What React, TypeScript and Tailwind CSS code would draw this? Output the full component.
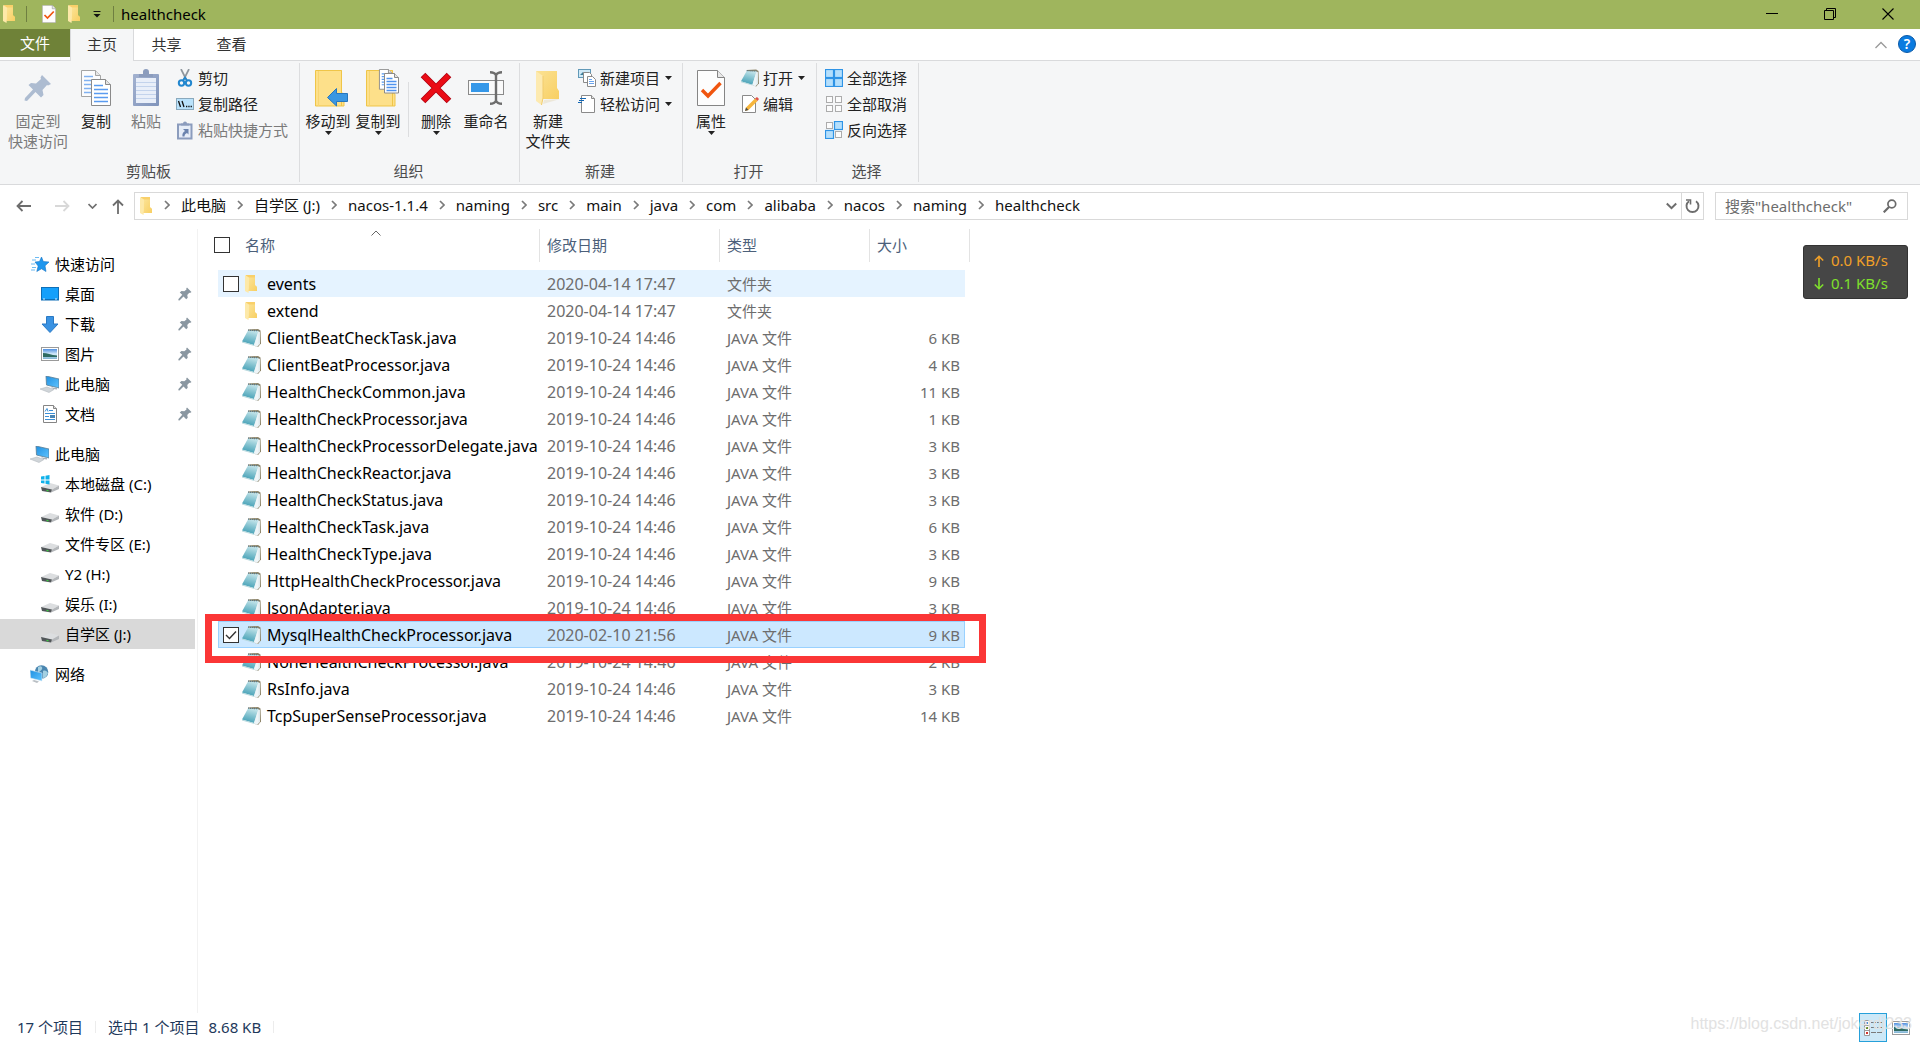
import { useState, type ReactNode } from "react";

type FileItem = { name: string; date: string; type: string; size: string };

const javaFile = (name: string, size: string, date = "2019-10-24 14:46"): FileItem => ({ name, date, type: "JAVA 文件", size });

const files: FileItem[] = [
  { name: "events", date: "2020-04-14 17:47", type: "文件夹", size: "" },
  { name: "extend", date: "2020-04-14 17:47", type: "文件夹", size: "" },
  javaFile("ClientBeatCheckTask.java", "6 KB"),
  javaFile("ClientBeatProcessor.java", "4 KB"),
  javaFile("HealthCheckCommon.java", "11 KB"),
  javaFile("HealthCheckProcessor.java", "1 KB"),
  javaFile("HealthCheckProcessorDelegate.java", "3 KB"),
  javaFile("HealthCheckReactor.java", "3 KB"),
  javaFile("HealthCheckStatus.java", "3 KB"),
  javaFile("HealthCheckTask.java", "6 KB"),
  javaFile("HealthCheckType.java", "3 KB"),
  javaFile("HttpHealthCheckProcessor.java", "9 KB"),
  javaFile("JsonAdapter.java", "3 KB"),
  javaFile("MysqlHealthCheckProcessor.java", "9 KB", "2020-02-10 21:56"),
  javaFile("NoneHealthCheckProcessor.java", "2 KB"),
  javaFile("RsInfo.java", "3 KB"),
  javaFile("TcpSuperSenseProcessor.java", "14 KB"),
];

const crumbs = ["此电脑", "自学区 (J:)", "nacos-1.1.4", "naming", "src", "main", "java", "com", "alibaba", "nacos", "naming", "healthcheck"];

/* ---------- icons ---------- */

function Gradients() {
  return (
    <svg className="absolute h-0 w-0" aria-hidden="true">
      <defs>
        <linearGradient id="folder" x1="0" x2="1" y1="0" y2="1">
          <stop offset="0" stopColor="#fbe294" />
          <stop offset="1" stopColor="#f8cf62" />
        </linearGradient>
        <linearGradient id="note" x1="0.6" x2="0.3" y1="0" y2="1">
          <stop offset="0" stopColor="#c3e4ea" />
          <stop offset="0.5" stopColor="#7fc0ce" />
          <stop offset="1" stopColor="#3f9db4" />
        </linearGradient>
        <linearGradient id="screen" x1="0" x2="1" y1="0" y2="1">
          <stop offset="0" stopColor="#1f8fe0" />
          <stop offset="1" stopColor="#5ec4ff" />
        </linearGradient>
        <linearGradient id="sky" x1="0" x2="0" y1="0" y2="1">
          <stop offset="0" stopColor="#4f8fe0" />
          <stop offset="0.5" stopColor="#d6ebfa" />
          <stop offset="1" stopColor="#7fb3d3" />
        </linearGradient>
        <linearGradient id="clip" x1="0" x2="1" y1="0" y2="1">
          <stop offset="0" stopColor="#a3b2d0" />
          <stop offset="1" stopColor="#8094bb" />
        </linearGradient>
      </defs>
    </svg>
  );
}

const SmallFolder = () => (
  <svg width="13" height="18" viewBox="0 0 13 18">
    <path d="M1 0h9v10l2 2v4H1z" fill="#f9d06a" />
    <path d="M0 0l4 2.500v11L3.500 18 0 16z" fill="#fde9a9" />
    <path d="M4 2.500h6V11l2 1v4H3.800z" fill="url(#folder)" />
  </svg>
);

const BigFolder = () => (
  <svg width="26" height="36" viewBox="0 0 26 36">
    <path d="M1 1h21v17l2 3v8H1z" fill="url(#folder)" />
    <path d="M1 1l7 5v22l-1.500 7L1 31z" fill="#fdeab0" />
    <path d="M8 6v22l-1.500 7" stroke="#f1cc6c" fill="none" />
    <path d="M9 30l16-1-17 5z" fill="#e5d9bb" opacity="0.5" />
  </svg>
);

const NoteIcon = () => (
  <svg width="19" height="18" viewBox="0 0 19 18">
    <path d="M6 .5l10-.5 2.500 1.500.5 13-3 3.500-3-1z" fill="#8d8468" />
    <path d="M15.500 2L18 3v12l-3 3-3.500-2z" fill="#dfe9ec" />
    <path d="M6 1.500l10.500.500L12 16 0 12.500z" fill="url(#note)" />
    <path d="M6 1.200l10.500.600" stroke="#57798a" strokeWidth="1.200" strokeDasharray="1 1" />
    <path d="M12 16l4.500-14v13.500l-1.500 2z" fill="#eef5f8" />
    <path d="M0 12.500L12 16l.300 1L0 13.500z" fill="#b5d7dc" />
  </svg>
);

const PropertiesIcon = ({ className }: { className: string }) => (
  <svg className={className} viewBox="0 0 28 36">
    <path d="M.5.5h20l7 7v28H.5z" fill="#fdfdfd" stroke="#858585" />
    <path d="M20.500.5v7h7" fill="#e8e8e8" stroke="#858585" />
    <path d="M5 20l6 6L23.500 13" fill="none" stroke="#f0550f" strokeWidth="3.400" />
  </svg>
);

const BigPin = () => (
  <svg width="28" height="28" viewBox="0 0 28 28" fill="#adbcd1">
    <path d="M18 1l9 9-3 1.500-1-.5-4.500 5 1 5-2.500 2.500-5.500-5.500L3 27l-2.500-.5L1 24l8-8.500L4.500 11 7 9l5 .5L17 5l-.5-1.500z" />
  </svg>
);

const Pin = () => (
  <svg width="14" height="14" viewBox="0 0 28 28" fill="#8a97a1">
    <path d="M18 1l9 9-3 2-1.500-.5-4 4.500 1 5.500-3 3-5.500-5.500L3 27l-2.500-.5L1 24l7.500-8.500L3.500 11 7 8l5.500.5L17 5l-.5-2z" />
  </svg>
);

const Page = ({ x, y, big }: { x: number; y: number; big?: boolean }) => (
  <g transform={`translate(${x} ${y})`}>
    <path d={big ? "M.5.5h14l5 5v21H.5z" : "M.5.5h10l4 4v18H.5z"} fill="#fff" stroke="#8a8a8a" />
    <path d={big ? "M14.500.5v5h5" : "M10.500.5v4h4"} fill="#e4e4e4" stroke="#8a8a8a" />
    <path d={big ? "M3 6.500h9M3 10.500h14M3 14.500h14M3 18.500h14M3 22.500h14" : "M3 5.500h6M3 8.500h9M3 11.500h9M3 14.500h9M3 17.500h9"} stroke="#5a9bf0" strokeWidth="1.300" />
  </g>
);

const CopyIcon = () => (
  <svg width="30" height="37" viewBox="0 0 30 37">
    <g opacity="0.750"><Page x={0} y={0} big /></g>
    <Page x={10} y={9} big />
  </svg>
);

const PasteIcon = () => (
  <svg width="26" height="38" viewBox="0 0 26 38">
    <rect x="0" y="5" width="26" height="32" rx="1" fill="url(#clip)" />
    <rect x="3" y="9" width="20" height="25" fill="#e9eff9" />
    <path d="M3 13.500h20M3 17.500h20M3 21.500h20M3 25.500h20M3 29.500h20" stroke="#c3d3ec" />
    <path d="M6 8V5h4V3a3 3 0 016 0v2h4v3z" fill="#8b9cbd" />
  </svg>
);

const CutIcon = () => (
  <svg width="18" height="18" viewBox="0 0 18 18" fill="none">
    <path d="M5 0l5.500 11M13 0L7.500 11" stroke="#8f979e" strokeWidth="1.700" />
    <circle cx="5.500" cy="14" r="2.700" stroke="#2287cf" strokeWidth="2" />
    <circle cx="12.500" cy="14" r="2.700" stroke="#2287cf" strokeWidth="2" />
    <path d="M7 11.500l2-3 2 3" stroke="#2287cf" strokeWidth="1.800" />
  </svg>
);

const CopyPathIcon = () => (
  <svg width="18" height="12" viewBox="0 0 18 12">
    <rect x=".5" y=".5" width="17" height="11" fill="#b9e2fb" stroke="#8aa9bd" />
    <path d="M2.500 3l2 6M6 3l2 6" stroke="#111" strokeWidth="1.300" />
    <path d="M10 8.500h1.300M12.300 8.500h1.300M14.600 8.500h1.300" stroke="#111" strokeWidth="1.300" />
  </svg>
);

const PasteShortcutIcon = () => (
  <svg width="16" height="19" viewBox="0 0 16 19">
    <path d="M1 3.500h13.500v14H1z" fill="#e6edf8" stroke="#8b9cbd" strokeWidth="2" />
    <path d="M4 4.500V2.500h2a2 2 0 014 0h2v2z" fill="#8b9cbd" />
    <path d="M6 8h5.500v5.500L10 12c-2 .8-2.500 2-2.500 3.500h-2C5 13 6 11 8 10z" fill="#6b83ae" />
  </svg>
);

const FolderBody = () => (
  <>
    <path d="M.5.500h26V26l0-2c1-1.500 2.500-1 2.500 1v11H.5z" fill="#fde08a" stroke="#efc548" />
    <path d="M26.500.5V36" stroke="#efc548" />
    <path d="M3.500 1v35" stroke="#f8d571" />
  </>
);

const MoveToIcon = () => (
  <svg width="40" height="37" viewBox="-7 0 40 37">
    <FolderBody />
    <path d="M12.500 27.500l9-9v5h11v8h-11V36z" fill="#3a97e3" stroke="#2877bd" />
  </svg>
);

const CopyToIcon = () => (
  <svg width="42" height="38" viewBox="-9 0 42 38">
    <g transform="translate(0 1)"><FolderBody /></g>
    <g transform="translate(13 0) scale(0.900)"><Page x={0} y={0} /></g>
    <g transform="translate(18 4)">
      <path d="M.5.500h10l4 4V20H.5z" fill="#fff" stroke="#8a8a8a" />
      <path d="M10.500.5v4h4" fill="#e4e4e4" stroke="#8a8a8a" />
      <path d="M2.500 5.500h6M2.500 8.500h10M2.500 11.500h10M2.500 14.500h10M2.500 17.500h10" stroke="#4f93ee" strokeWidth="1.300" />
    </g>
  </svg>
);

const DeleteIcon = () => (
  <svg width="32" height="32" viewBox="0 0 32 32">
    <path d="M3 3l26 26M29 3L3 29" stroke="#b00010" strokeWidth="6.500" />
    <path d="M3.500 3.500l25 25M28.500 3.500l-25 25" stroke="#ea0c15" strokeWidth="4.800" />
  </svg>
);

const RenameIcon = () => (
  <svg width="36" height="34" viewBox="0 0 36 34" fill="none">
    <rect x=".5" y="9.500" width="35" height="14" fill="#fafafa" stroke="#8a8a8a" />
    <rect x="3" y="12" width="18" height="9" fill="#3497e8" />
    <path d="M22 1.200c3 0 5 .8 6 3 1-2.200 3-3 6-3M22 32.800c3 0 5-.8 6-3 1 2.200 3 3 6 3M28 4v26" stroke="#6d6d6d" strokeWidth="2.400" />
  </svg>
);

const NewItemIcon = () => (
  <svg width="18" height="18" viewBox="0 0 18 18">
    <rect x=".5" y=".5" width="12" height="8" fill="#cfe9f7" stroke="#6199b8" />
    <path d="M2 6l3-3 3 3z" fill="#3c7d98" />
    <path d="M5.500 3.500h6l2 2v8h-8z" fill="#fff" stroke="#8a8a8a" />
    <path d="M9.500 7.500h5l3 3v7h-8z" fill="#fff" stroke="#8a8a8a" />
    <path d="M11 10.500h3M11 12.500h5M11 14.500h5" stroke="#6aa4ee" />
  </svg>
);

const EasyAccessIcon = () => (
  <svg width="18" height="18" viewBox="0 0 18 18">
    <path d="M3.500.5h10l3 3v14h-13z" fill="#fff" stroke="#8a8a8a" />
    <path d="M13.500.5v3h3" fill="#e4e4e4" stroke="#8a8a8a" />
    <path d="M2 3.500h6M1 5.500h5M0 7.500h4" stroke="#1467b3" strokeWidth="1.200" />
  </svg>
);

const EditIcon = () => (
  <svg width="18" height="18" viewBox="0 0 18 18">
    <path d="M1.500.5h9l4 4v13h-13z" fill="#fff" stroke="#8a8a8a" />
    <path d="M5 12.500l9-9 2.500 2.500-9 9L4 16z" fill="#f6b53c" />
    <path d="M14 3.500L16 2l2 2-1.500 2z" fill="#e0524a" />
    <path d="M4 16l1-3.500L7.500 15z" fill="#4a4a4a" />
  </svg>
);

function SelectIcon({ on }: { on: boolean[] }) {
  const spots = [[0, 0], [9, 0], [0, 9], [9, 9]];
  return (
    <svg width="18" height="18" viewBox="0 0 18 18">
      {spots.map(([x, y], i) => on[i]
        ? <rect key={i} x={x + 0.5} y={y + 0.5} width="8" height="8" fill="#b5dffc" stroke="#2f94e6" strokeWidth="1.200" />
        : <rect key={i} x={x + 1.5} y={y + 1.5} width="6" height="6" fill="#fcfcfc" stroke="#acacac" />)}
    </svg>
  );
}

const StarIcon = () => (
  <svg width="18" height="18" viewBox="0 0 18 18">
    <path d="M10.500 2l1.800 4.500 5.700.5-4 3.800 1 5.700-4.500-2.700L5.800 16.500 7.200 11 4 7l4.500-.5z" fill="#1f97ee" stroke="#1673c4" strokeWidth=".6" />
    <path d="M4 2.500h4M1 5h4M0 9h4M1 12.500h4M0 15h4" stroke="#6cbaf2" />
  </svg>
);

const DesktopIcon = () => (
  <svg width="18" height="14" viewBox="0 0 18 14">
    <rect x=".5" y=".5" width="17" height="12.500" fill="#15a0fb" stroke="#0e6fb8" />
    <path d="M1 12.500h16" stroke="#0e6fb8" />
    <path d="M2 12h2M14 12h2" stroke="#d7efff" />
  </svg>
);

const DownloadIcon = () => (
  <svg width="18" height="17" viewBox="0 0 18 17">
    <path d="M5.500.5h7V8h4.500l-8 8.500L1 8h4.500z" fill="#3a92e2" stroke="#2a79c4" />
  </svg>
);

const PictureIcon = () => (
  <svg width="18" height="14" viewBox="0 0 18 14">
    <rect x=".5" y=".5" width="17" height="13" fill="#fff" stroke="#9a9a9a" />
    <rect x="2" y="2" width="14" height="10" fill="url(#sky)" />
    <path d="M2 6c4 0 8 2 14 2.500V10H2z" fill="#2f6b62" />
  </svg>
);

const ComputerIcon = () => (
  <svg width="19" height="17" viewBox="0 0 19 17">
    <path d="M6 0l13 3v9L6.500 9z" fill="url(#screen)" stroke="#5b7d94" strokeWidth=".8" />
    <path d="M11 11l3 1 3-.5v2l-4-.5z" fill="#a8b1b8" />
    <path d="M0 13l7-2 7 2.500-5 3z" fill="#d0d5d9" stroke="#b3babf" strokeWidth=".6" />
  </svg>
);

const DocumentIcon = () => (
  <svg width="18" height="18" viewBox="0 0 18 18">
    <path d="M2.500.5h10l3 3v14h-13z" fill="#fff" stroke="#858585" />
    <path d="M12.500.5v3h3" fill="#ddd" stroke="#858585" />
    <path d="M4 6.500l2-3 1 3M8 5.500h4M4 8.500h10M4 11.500h4M4 14.500h10" stroke="#3b8fd6" fill="none" />
    <rect x="9" y="10" width="5" height="3" fill="#4a86b5" />
  </svg>
);

const DriveIcon = ({ system }: { system?: boolean }) => (
  <svg width="18" height="18" viewBox="0 -2 18 18">
    <path d="M0 10l9-4 9 2.500-7 4z" fill="#dcdee0" />
    <path d="M11 12.500l7-4V12l-8 3.500z" fill="#b4b7ba" />
    <path d="M0 10l11 2.500-1 3L1 14z" fill="#515659" />
    <path d="M5.500 12.800l2 .4v1.300l-2-.4z" fill="#3ecf45" />
    {system && <path d="M0-.5L3.500-1v3.500H0zM4.500-1.200L8.500-2v4.500h-4zM0 3.500h3.500v3L0 6zM4.500 3.500h4v4l-4-.8z" fill="#10b1ea" />}
  </svg>
);

const NetworkIcon = () => (
  <svg width="19" height="18" viewBox="0 0 19 18">
    <circle cx="11.500" cy="7" r="6.800" fill="#4a86b0" />
    <path d="M8 2c3-2 5 0 4 2s-3 2-4 5M13 6c2-1 4 0 5 2-1 3-3 5-5 5z" fill="#a4d0e2" />
    <path d="M0 5l12 3v8L.5 13z" fill="url(#screen)" stroke="#dbe9f2" strokeWidth=".6" />
    <path d="M4 15l5 1.500-2 1.500-5-2z" fill="#b9bfc4" />
  </svg>
);

const DownArrow = () => (
  <svg width="7" height="4" viewBox="0 0 7 4"><path d="M0 0h7L3.500 4z" fill="#222" /></svg>
);

const ChevronRight = () => (
  <svg width="6" height="10" viewBox="0 0 6 10"><path d="M1 1l4 4-4 4" fill="none" stroke="#7a7a7a" strokeWidth="1.700" /></svg>
);

/* ---------- ribbon ---------- */

function RibbonGroup({ label, width, children }: { label: string; width: string; children: ReactNode }) {
  return (
    <div className={`my-[2px] flex shrink-0 flex-col border-r border-[#dcdddf] ${width}`}>
      <div className="flex flex-1 items-start pl-[3px]">{children}</div>
      <div className="pr-[2px] pb-px text-center leading-5 text-[#4c4c4c]">{label}</div>
    </div>
  );
}

type BigButtonProps = { icon: ReactNode; lines: string[]; wide?: boolean; menu?: boolean; disabled?: boolean };

function BigButton({ icon, lines, wide, menu, disabled }: BigButtonProps) {
  return (
    <button disabled={disabled} className={`flex flex-col items-center pt-[6px] leading-5 ${wide ? "w-[68px] pl-[2px]" : "w-[50px]"} ${disabled ? "text-[#7a7a7a]" : "text-[#222]"}`}>
      <span className="mb-1 flex h-[38px] items-center">{icon}</span>
      {lines.map((line) => <span key={line} className="whitespace-nowrap">{line}</span>)}
      {menu && <DownArrow />}
    </button>
  );
}

type SmallButtonProps = { icon: ReactNode; label: string; menu?: boolean; disabled?: boolean };

function SmallButton({ icon, label, menu, disabled }: SmallButtonProps) {
  return (
    <button disabled={disabled} className={`flex h-[26px] items-center gap-1 whitespace-nowrap ${disabled ? "text-[#7a7a7a]" : "text-[#222]"}`}>
      <span className="flex w-[18px] justify-center">{icon}</span>
      <span className="pb-px">{label}</span>
      {menu && <span className="pl-px"><DownArrow /></span>}
    </button>
  );
}

const SmallList = ({ children }: { children: ReactNode }) => <div className="flex flex-col pt-[2px] pl-[5px]">{children}</div>;

function Ribbon() {
  return (
    <div className="flex h-[124px] border-b border-[#d9dadc] bg-[#f5f6f7]">
      <RibbonGroup label="剪贴板" width="w-[300px]">
        <BigButton icon={<BigPin />} lines={["固定到", "快速访问"]} wide disabled />
        <BigButton icon={<CopyIcon />} lines={["复制"]} />
        <BigButton icon={<PasteIcon />} lines={["粘贴"]} disabled />
        <SmallList>
          <SmallButton icon={<CutIcon />} label="剪切" />
          <SmallButton icon={<CopyPathIcon />} label="复制路径" />
          <SmallButton icon={<PasteShortcutIcon />} label="粘贴快捷方式" disabled />
        </SmallList>
      </RibbonGroup>
      <RibbonGroup label="组织" width="w-[220px]">
        <BigButton icon={<MoveToIcon />} lines={["移动到"]} menu />
        <BigButton icon={<CopyToIcon />} lines={["复制到"]} menu />
        <div className="mt-[19px] mr-[2px] ml-[5px] h-[55px] w-px bg-[#dcdddf]" />
        <BigButton icon={<DeleteIcon />} lines={["删除"]} menu />
        <BigButton icon={<RenameIcon />} lines={["重命名"]} />
      </RibbonGroup>
      <RibbonGroup label="新建" width="w-[163px]">
        <BigButton icon={<BigFolder />} lines={["新建", "文件夹"]} />
        <SmallList>
          <SmallButton icon={<NewItemIcon />} label="新建项目" menu />
          <SmallButton icon={<EasyAccessIcon />} label="轻松访问" menu />
        </SmallList>
      </RibbonGroup>
      <RibbonGroup label="打开" width="w-[134px]">
        <BigButton icon={<PropertiesIcon className="h-9 w-7" />} lines={["属性"]} menu />
        <SmallList>
          <SmallButton icon={<NoteIcon />} label="打开" menu />
          <SmallButton icon={<EditIcon />} label="编辑" />
        </SmallList>
      </RibbonGroup>
      <RibbonGroup label="选择" width="w-[102px]">
        <SmallList>
          <SmallButton icon={<SelectIcon on={[true, true, true, true]} />} label="全部选择" />
          <SmallButton icon={<SelectIcon on={[false, false, false, false]} />} label="全部取消" />
          <SmallButton icon={<SelectIcon on={[false, true, true, false]} />} label="反向选择" />
        </SmallList>
      </RibbonGroup>
    </div>
  );
}

/* ---------- title, tabs, address ---------- */

function TitleBar() {
  return (
    <header className="flex h-[29px] items-center bg-[#9fb55d] pb-px pl-[3px] text-black">
      <SmallFolder />
      <div className="ml-[10px] h-4 w-px bg-[#6f7f41]" />
      <button aria-label="属性" className="ml-[15px]"><PropertiesIcon className="h-[18px] w-[14px]" /></button>
      <button aria-label="新建文件夹" className="ml-3"><SmallFolder /></button>
      <button aria-label="自定义快速访问工具栏" className="ml-3">
        <svg width="8" height="8" viewBox="0 0 8 8"><path d="M.5 1.500h7" stroke="#111" /><path d="M.5 4h7L4 7.500z" fill="#111" /></svg>
      </button>
      <div className="ml-3 h-4 w-px bg-[#6f7f41]" />
      <h1 className="ml-[7px] flex-1">healthcheck</h1>
      <button aria-label="最小化" className="flex h-full w-[58px] items-center justify-center">
        <svg width="12" height="12" viewBox="0 0 12 12"><path d="M0 5.500h12" stroke="#000" /></svg>
      </button>
      <button aria-label="还原" className="flex h-full w-[58px] items-center justify-center">
        <svg width="12" height="12" viewBox="0 0 12 12" fill="none" stroke="#000"><path d="M.5 2.500h9v9h-9zM2.500 2.500v-2h9v9h-2" /></svg>
      </button>
      <button aria-label="关闭" className="mr-[3px] flex h-full w-[58px] items-center justify-center">
        <svg width="12" height="12" viewBox="0 0 12 12"><path d="M.5.5l11 11M11.500.5l-11 11" stroke="#000" strokeWidth="1.100" /></svg>
      </button>
    </header>
  );
}

function Tabs() {
  return (
    <nav className="flex h-8 border-b border-[#d9dadc] text-[#333]">
      <button className="mb-[3px] w-[70px] bg-[#6f8238] text-white">文件</button>
      <button className="-mb-px w-16 border-x border-[#d9dadc] bg-[#f5f6f7] pb-[2px]">主页</button>
      <button className="w-[65px] pb-px">共享</button>
      <button className="w-[65px] pb-px">查看</button>
      <div className="flex-1" />
      <button aria-label="最小化功能区">
        <svg width="12" height="8" viewBox="0 0 12 8"><path d="M.5 7L6 1.500 11.500 7" fill="none" stroke="#9a9a9a" strokeWidth="1.300" /></svg>
      </button>
      <button aria-label="帮助" className="mr-1 ml-[11px] pb-px">
        <span className="flex h-[18px] w-[18px] items-center justify-center rounded-full border border-[#0b5aa8] bg-[#0a7be0] text-sm leading-4 font-semibold text-white">?</span>
      </button>
    </nav>
  );
}

function AddressBar() {
  return (
    <div className="flex h-11 items-start pt-[7px] pr-3 pl-4">
      <div className="flex h-7 w-[118px] shrink-0 items-center">
        <button aria-label="后退" className="mr-6">
          <svg width="15" height="12" viewBox="0 0 15 12"><path d="M15 6H1.500M6.500 1l-5 5 5 5" fill="none" stroke="#6d6d6d" strokeWidth="1.800" /></svg>
        </button>
        <button aria-label="前进" className="mr-[18px]">
          <svg width="15" height="12" viewBox="0 0 15 12"><path d="M0 6h13.500M8.500 1l5 5-5 5" fill="none" stroke="#d8d8d8" strokeWidth="1.800" /></svg>
        </button>
        <button aria-label="最近浏览的位置" className="mr-[15px]">
          <svg width="9" height="6" viewBox="0 0 9 6"><path d="M.5 1l4 4 4-4" fill="none" stroke="#707070" strokeWidth="1.700" /></svg>
        </button>
        <button aria-label="上移">
          <svg width="12" height="15" viewBox="0 0 12 15"><path d="M6 15V1.500M1 6.500l5-5 5 5" fill="none" stroke="#6d6d6d" strokeWidth="1.800" /></svg>
        </button>
      </div>
      <div className="flex h-7 flex-1 items-center border border-[#d9d9d9] pl-[5px] whitespace-nowrap text-[#111]">
        <SmallFolder />
        {crumbs.map((crumb, i) => (
          <span key={i} className="flex items-center gap-[11px] pb-[2px] pl-[11px]">
            <ChevronRight />
            <a href="#">{crumb}</a>
          </span>
        ))}
        <div className="flex-1" />
        <button aria-label="上一个位置" className="mr-1">
          <svg width="11" height="8" viewBox="0 0 11 8"><path d="M.8 1.500l4.700 4.700 4.700-4.700" fill="none" stroke="#6d6d6d" strokeWidth="2" /></svg>
        </button>
        <button aria-label="刷新" className="flex h-full w-[22px] items-center justify-center border-l border-[#d9d9d9]">
          <svg width="15" height="15" viewBox="0 0 15 15" fill="none" stroke="#6d6d6d" strokeWidth="1.900"><path d="M11 2.200a6 6 0 11-7 0" /><path d="M1 1h4.500v4.500" strokeWidth="1.600" /></svg>
        </button>
      </div>
      <label className="ml-[11px] flex h-7 w-[193px] items-center border border-[#d9d9d9] pr-[10px] pl-[9px]">
        <input aria-label="搜索" placeholder={'搜索"healthcheck"'} className="w-full min-w-0 flex-1 outline-none placeholder:text-[#6d6d6d]" />
        <svg width="14" height="14" viewBox="0 0 14 14" fill="none" stroke="#6a6a6a"><circle cx="8.800" cy="5" r="3.900" strokeWidth="1.700" /><path d="M6 8l-5.300 5.300" strokeWidth="2.200" /></svg>
      </label>
    </div>
  );
}

/* ---------- sidebar ---------- */

function NavItem({ icon, label, root, pinned, active }: { icon: ReactNode; label: string; root?: boolean; pinned?: boolean; active?: boolean }) {
  return (
    <li>
      <a href="#" className={`mr-[2px] flex h-[30px] items-center gap-[6px] pr-[3px] ${root ? "pl-[30px]" : "pl-10"} ${active ? "bg-[#d9d9d9]" : ""}`}>
        <span className="flex w-[19px] justify-center">{icon}</span>
        <span className="flex-1">{label}</span>
        {pinned && <Pin />}
      </a>
    </li>
  );
}

function Sidebar() {
  return (
    <aside className="w-[198px] shrink-0 border-r border-[#f2f2f2] pt-5 text-black">
      <ul className="mb-[10px]">
        <NavItem root icon={<StarIcon />} label="快速访问" />
        <NavItem pinned icon={<DesktopIcon />} label="桌面" />
        <NavItem pinned icon={<DownloadIcon />} label="下载" />
        <NavItem pinned icon={<PictureIcon />} label="图片" />
        <NavItem pinned icon={<ComputerIcon />} label="此电脑" />
        <NavItem pinned icon={<DocumentIcon />} label="文档" />
      </ul>
      <ul className="mb-[10px]">
        <NavItem root icon={<ComputerIcon />} label="此电脑" />
        <NavItem icon={<DriveIcon system />} label="本地磁盘 (C:)" />
        <NavItem icon={<DriveIcon />} label="软件 (D:)" />
        <NavItem icon={<DriveIcon />} label="文件专区 (E:)" />
        <NavItem icon={<DriveIcon />} label="Y2 (H:)" />
        <NavItem icon={<DriveIcon />} label="娱乐 (I:)" />
        <NavItem active icon={<DriveIcon />} label="自学区 (J:)" />
      </ul>
      <ul>
        <NavItem root icon={<NetworkIcon />} label="网络" />
      </ul>
    </aside>
  );
}

/* ---------- file table ---------- */

function Checkbox({ label, checked, onChange, visible = true }: { label: string; checked: boolean; onChange: () => void; visible?: boolean }) {
  return (
    <span className={`relative block h-4 w-4 ${visible ? "" : "opacity-0 hover:opacity-100"}`}>
      <input type="checkbox" aria-label={label} checked={checked} onChange={onChange} className="block h-4 w-4 appearance-none border border-[#333] bg-white" />
      {checked && (
        <svg className="pointer-events-none absolute inset-0" width="16" height="16" viewBox="0 0 16 16"><path d="M3 8l3.500 3.500L13 4.500" fill="none" stroke="#333" strokeWidth="1.400" /></svg>
      )}
    </span>
  );
}

function FileTable() {
  const [selected, setSelected] = useState(["MysqlHealthCheckProcessor.java"]);
  const toggle = (name: string) =>
    setSelected((prev) => (prev.includes(name) ? prev.filter((n) => n !== name) : [...prev, name]));

  const allSelected = selected.length === files.length;

  return (
    <div className="relative ml-4 w-[756px] self-start">
      <table className="w-full table-fixed border-separate border-spacing-0 whitespace-nowrap">
        <colgroup>
          <col className="w-1" />
          <col className="w-[322px]" />
          <col className="w-[180px]" />
          <col className="w-[150px]" />
          <col className="w-[95px]" />
          <col className="w-[5px]" />
        </colgroup>
        <thead className="text-left text-[#4c607a]">
          <tr>
            <th colSpan={2} className="relative p-0 pb-2 font-normal">
              <div className="flex h-[33px] items-center gap-[15px] border-r border-[#e3e3e3] pb-px">
                <Checkbox label="全选" checked={allSelected} onChange={() => setSelected(allSelected ? [] : files.map((f) => f.name))} />
                <button>名称</button>
              </div>
              <svg className="absolute top-px left-[157px]" width="10" height="6" viewBox="0 0 10 6"><path d="M.5 5.500L5 1l4.500 4.500" fill="none" stroke="#666" /></svg>
            </th>
            <th className="p-0 pb-2 font-normal">
              <div className="flex h-[33px] items-center border-r border-[#e3e3e3] pb-px pl-[7px]"><button>修改日期</button></div>
            </th>
            <th className="p-0 pb-2 font-normal">
              <div className="flex h-[33px] items-center border-r border-[#e3e3e3] pb-px pl-[7px]"><button>类型</button></div>
            </th>
            <th colSpan={2} className="p-0 pb-2 font-normal">
              <div className="flex h-[33px] items-center border-r border-[#e3e3e3] pb-px pl-[7px]"><button>大小</button></div>
            </th>
          </tr>
        </thead>
        <tbody className="text-[#6d6d6d]">
          {files.map((file, i) => {
            const isSelected = selected.includes(file.name);
            const hovered = i === 0;
            const cell = `border-y p-0 ${isSelected ? "border-[#99d1ff] bg-[#cce8ff]" : hovered ? "border-[#e5f3ff] bg-[#e5f3ff]" : "border-transparent"}`;
            return (
              <tr key={file.name} className="h-[27px]">
                <td className="p-0" />
                <td className={`${cell} border-l`}>
                  <div className="flex h-[25px] items-center pl-1 text-base leading-5 text-black">
                    <Checkbox label={file.name} checked={isSelected} visible={isSelected || hovered} onChange={() => toggle(file.name)} />
                    <span className="mr-[6px] ml-[3px] flex w-[19px] justify-center">{file.type === "文件夹" ? <SmallFolder /> : <NoteIcon />}</span>
                    <span>{file.name}</span>
                  </div>
                </td>
                <td className={`${cell} pl-[7px] text-base leading-5`}>{file.date}</td>
                <td className={`${cell} pl-[7px]`}>{file.type}</td>
                <td className={`${cell} border-r pr-1 text-right`}>{file.size}</td>
                <td className="p-0" />
              </tr>
            );
          })}
        </tbody>
      </table>
      <div className="pointer-events-none absolute top-[385px] -left-[9px] h-[49px] w-[781px] border-[7px] border-[#fb3636]" />
    </div>
  );
}

function StatusBar() {
  return (
    <footer className="flex h-[29px] items-center pr-[10px] pl-[17px] text-[#1e395b]">
      <div className="flex items-center pb-[2px]">
        <span>17 个项目</span>
        <div className="mx-3 h-3 w-px bg-[#ececec]" />
        <span>选中 1 个项目</span>
        <span className="ml-[9px]">8.68 KB</span>
        <div className="mx-3 h-3 w-px bg-[#ececec]" />
      </div>
      <div className="flex-1" />
      <button aria-label="详细信息" className="mr-[5px] flex h-[29px] w-7 items-center justify-center border border-[#26a0da] bg-[#cce8f7]">
        <svg width="18" height="16" viewBox="0 0 18 16">
          <path d="M.5.5h5v15h-5zM.5 5.500h5M.5 10.500h5" fill="#fff" stroke="#9a9a9a" />
          <path d="M2 3h2" stroke="#3b8fd6" strokeWidth="2" />
          <path d="M2 8h2" stroke="#5d8a2d" strokeWidth="2" />
          <path d="M2 13h2" stroke="#d0342c" strokeWidth="2" />
          <path d="M7 2.500h5M13 2.500h5M7 7.500h5M13 7.500h5M7 12.500h5M13 12.500h5" stroke="#7a7a7a" />
        </svg>
      </button>
      <button aria-label="大图标"><PictureIcon /></button>
    </footer>
  );
}

function NetSpeed() {
  return (
    <div className="absolute top-[245px] right-3 w-[105px] rounded-[3px] border border-[#333] bg-[#464646] py-[3px] pl-[10px] leading-[23px]">
      <div className="flex items-center gap-[7px] text-[#f0a028]">
        <svg width="10" height="12" viewBox="0 0 10 12"><path d="M5 12V1.500M.8 5.500L5 1.300l4.200 4.200" fill="none" stroke="currentColor" strokeWidth="1.600" /></svg>
        0.0 KB/s
      </div>
      <div className="flex items-center gap-[7px] text-[#7fe02c]">
        <svg width="10" height="12" viewBox="0 0 10 12"><path d="M5 0v10.500M.8 6.500L5 10.700l4.200-4.200" fill="none" stroke="currentColor" strokeWidth="1.600" /></svg>
        0.1 KB/s
      </div>
    </div>
  );
}

export default function App() {
  return (
    <div className="relative flex min-h-screen flex-col bg-white font-['Noto_Sans','Noto_Sans_CJK_SC',sans-serif] text-[15px] leading-5">
      <Gradients />
      <TitleBar />
      <Tabs />
      <Ribbon />
      <AddressBar />
      <div className="flex flex-1">
        <Sidebar />
        <main className="flex flex-1">
          <FileTable />
        </main>
      </div>
      <StatusBar />
      <NetSpeed />
      <div className="pointer-events-none absolute right-2 bottom-[6px] font-['Liberation_Sans',sans-serif] text-base text-[#e2e2e2]">https://blog.csdn.net/jokerdj233</div>
    </div>
  );
}
